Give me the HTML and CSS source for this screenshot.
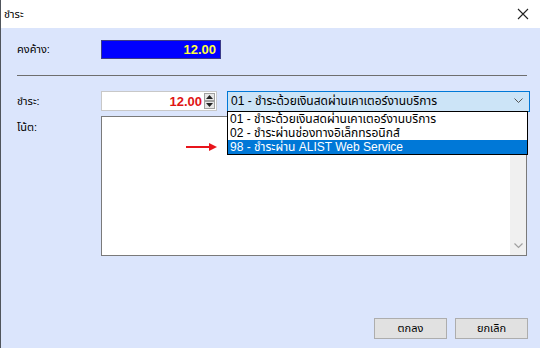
FILE: index.html
```html
<!DOCTYPE html>
<html lang="th">
<head>
    <meta charset="UTF-8">
    <meta name="viewport" content="width=device-width, initial-scale=1.0">
    <title>ชำระ</title>
    <link rel="stylesheet" href="styles.css">
</head>
<body>
    <div class="window">
        <div class="titlebar">
            <span class="title">ชำระ</span>
            <span class="close">
                <svg width="12" height="12" viewBox="0 0 12 12"><path d="M1 1L11 11M11 1L1 11" stroke="#222" stroke-width="1.1"/></svg>
            </span>
        </div>
        <div class="content">
            <div class="row balance-row">
                <div class="label">คงค้าง:</div>
                <div class="balance">12.00</div>
            </div>
            <div class="divider"></div>
            <div class="row pay-row">
                <div class="label">ชำระ:</div>
                <div class="amount">
                    <span class="amount-value">12.00</span>
                    <span class="spin">
                        <span class="spin-btn"><svg width="7" height="4" viewBox="0 0 7 4"><path d="M0 4L3.5 0L7 4Z" fill="#222"/></svg></span>
                        <span class="spin-btn"><svg width="7" height="4" viewBox="0 0 7 4"><path d="M0 0L3.5 4L7 0Z" fill="#222"/></svg></span>
                    </span>
                </div>
                <div class="combo">
                    <span class="combo-text">01 - ชำระด้วยเงินสดผ่านเคาเตอร์งานบริการ</span>
                    <svg class="chev" width="9" height="6" viewBox="0 0 9 6"><path d="M0.5 0.5L4.5 4.5L8.5 0.5" fill="none" stroke="#555" stroke-width="1"/></svg>
                    <div class="dropdown">
                        <div class="option">01 - ชำระด้วยเงินสดผ่านเคาเตอร์งานบริการ</div>
                        <div class="option">02 - ชำระผ่านช่องทางอิเล็กทรอนิกส์</div>
                        <div class="option selected">98 - ชำระผ่าน ALIST Web Service</div>
                    </div>
                </div>
            </div>
            <div class="row note-row">
                <div class="label note-label">โน้ต:</div>
                <div class="note">
                    <div class="note-scroll">
                        <svg width="9" height="6" viewBox="0 0 9 6"><path d="M0.5 0.5L4.5 4.5L8.5 0.5" fill="none" stroke="#a0a0a0" stroke-width="1.2"/></svg>
                    </div>
                </div>
                <svg class="pointer" width="32" height="8" viewBox="0 0 32 8"><path d="M0 4H25" stroke="#e8141b" stroke-width="2"/><path d="M23 0L31 4L23 8Z" fill="#e8141b"/></svg>
            </div>
            <div class="actions">
                <div class="btn">ตกลง</div>
                <div class="btn">ยกเลิก</div>
            </div>
        </div>
    </div>
</body>
</html>
```

FILE: styles.css
```css
body {
    margin: 0;
    font-family: "Liberation Sans", "Noto Sans Thai", Tahoma, "DejaVu Sans", sans-serif;
    font-size: 11px;
    color: #000;
    background: #dbe5fc;
}

.window {
    width: 540px;
    height: 348px;
    display: flex;
    flex-direction: column;
    box-sizing: border-box;
    border-left: 1px solid #50555c;
}

.titlebar {
    height: 28px;
    background: #fff;
    display: flex;
    align-items: center;
    justify-content: space-between;
    padding: 0 11px 0 3px;
    font-size: 11px;
}

.close {
    display: flex;
}

.content {
    flex: 1;
    background: #dbe5fc;
    padding: 11px 0 0 16px;
}

.row {
    display: flex;
}

.label {
    width: 84px;
}

.balance-row {
    height: 20px;
    align-items: center;
}

.balance {
    width: 120px;
    height: 19px;
    box-sizing: border-box;
    background: #0000ff;
    border: 1px solid #3b3b8a;
    color: #ffff3c;
    font-weight: bold;
    font-size: 13px;
    text-align: right;
    padding-right: 4px;
    line-height: 17px;
}

.divider {
    width: 510px;
    height: 1px;
    background: #6e6e6e;
    margin: 16px 0 15px;
}

.pay-row {
    height: 20px;
    align-items: center;
}

.amount {
    width: 116px;
    height: 20px;
    box-sizing: border-box;
    background: #fff;
    border: 1px solid #c8c8c8;
    display: flex;
    align-items: center;
    justify-content: flex-end;
}

.amount-value {
    color: #e01414;
    font-weight: bold;
    font-size: 13px;
    padding-right: 2px;
}

.spin {
    width: 11px;
    height: 16px;
    display: flex;
    flex-direction: column;
    margin-right: 1px;
}

.spin-btn {
    flex: 1;
    background: #e6e6e6;
    border: 1px solid #a0a0a0;
    display: flex;
    align-items: center;
    justify-content: center;
}

.combo {
    position: relative;
    width: 303px;
    height: 21px;
    box-sizing: border-box;
    margin-left: 10px;
    background: #cce4f7;
    border: 1px solid #0078d7;
    display: flex;
    align-items: center;
    justify-content: space-between;
    padding: 0 6px 0 3px;
    font-size: 12px;
}

.dropdown {
    position: absolute;
    left: -1px;
    top: 19px;
    width: 301px;
    box-sizing: border-box;
    background: #fff;
    border: 1px solid #000;
    z-index: 2;
}

.option {
    height: 14px;
    line-height: 14px;
    padding-left: 2px;
    white-space: nowrap;
}

.option.selected {
    background: #0078d7;
    color: #fff;
}

.note-row {
    position: relative;
    margin-top: 5px;
}

.note-label {
    padding-top: 3px;
}

.note {
    width: 426px;
    height: 140px;
    box-sizing: border-box;
    background: #fff;
    border: 1px solid #7a7a7a;
    display: flex;
    justify-content: flex-end;
}

.note-scroll {
    width: 16px;
    background: #f0f0f0;
    display: flex;
    align-items: flex-end;
    justify-content: center;
    padding-bottom: 6px;
    box-sizing: border-box;
}

.pointer {
    position: absolute;
    left: 169px;
    top: 27px;
}

.actions {
    display: flex;
    justify-content: flex-end;
    gap: 8px;
    width: 511px;
    margin-top: 62px;
}

.btn {
    width: 73px;
    height: 21px;
    box-sizing: border-box;
    background: #e1e1e1;
    border: 1px solid #adadad;
    display: flex;
    align-items: center;
    justify-content: center;
    font-size: 11px;
}
```
